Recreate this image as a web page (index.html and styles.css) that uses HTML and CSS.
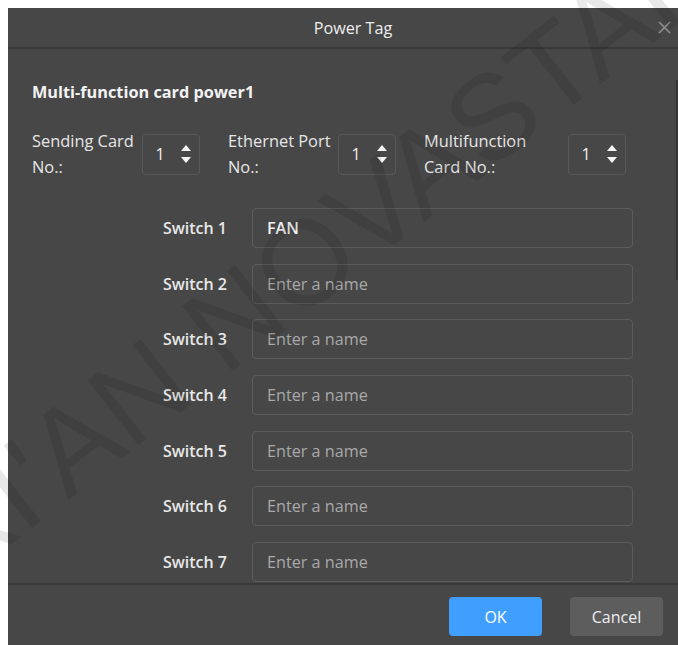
FILE: index.html
```html
<!DOCTYPE html>
<html lang="en">
<head>
<meta charset="utf-8">
<title>Power Tag</title>
<link rel="stylesheet" href="styles.css">
</head>
<body>
<div class="dialog">
  <div class="dialog-header">
    <span class="dialog-title">Power Tag</span>
    <button class="close-btn" aria-label="Close">
      <svg width="13" height="13" viewBox="0 0 13 13"><path d="M1 1 L12 12 M12 1 L1 12" stroke="currentColor" stroke-width="1.6" fill="none"/></svg>
    </button>
  </div>

  <div class="dialog-body">
    <h3 class="section-title">Multi-function card power1</h3>

    <div class="spin-row">
      <div class="spin-group">
        <label class="spin-label w-110">Sending Card No.:</label>
        <div class="spinner"><span class="spin-value">1</span><span class="spin-arrows"><i class="up"></i><i class="down"></i></span></div>
      </div>
      <div class="spin-group">
        <label class="spin-label w-110">Ethernet Port No.:</label>
        <div class="spinner"><span class="spin-value">1</span><span class="spin-arrows"><i class="up"></i><i class="down"></i></span></div>
      </div>
      <div class="spin-group">
        <label class="spin-label w-144">Multifunction<br>Card No.:</label>
        <div class="spinner"><span class="spin-value">1</span><span class="spin-arrows"><i class="up"></i><i class="down"></i></span></div>
      </div>
    </div>

    <div class="switch-list">
      <div class="switch-row"><label class="switch-label">Switch 1</label><input class="name-input" type="text" value="FAN" placeholder="Enter a name"></div>
      <div class="switch-row"><label class="switch-label">Switch 2</label><input class="name-input" type="text" placeholder="Enter a name"></div>
      <div class="switch-row"><label class="switch-label">Switch 3</label><input class="name-input" type="text" placeholder="Enter a name"></div>
      <div class="switch-row"><label class="switch-label">Switch 4</label><input class="name-input" type="text" placeholder="Enter a name"></div>
      <div class="switch-row"><label class="switch-label">Switch 5</label><input class="name-input" type="text" placeholder="Enter a name"></div>
      <div class="switch-row"><label class="switch-label">Switch 6</label><input class="name-input" type="text" placeholder="Enter a name"></div>
      <div class="switch-row"><label class="switch-label">Switch 7</label><input class="name-input" type="text" placeholder="Enter a name"></div>
      <div class="switch-row"><label class="switch-label">Switch 8</label><input class="name-input" type="text" placeholder="Enter a name"></div>
    </div>
    <div class="scroll-thumb"></div>
  </div>

  <div class="dialog-footer">
    <button class="btn btn-primary">OK</button>
    <button class="btn btn-secondary">Cancel</button>
  </div>
</div>

<div class="watermark">XI'AN NOVASTAR</div>
</body>
</html>
```

FILE: styles.css
```css
html, body {
  margin: 0;
  padding: 0;
  background: #ffffff;
  overflow: hidden;
}

body {
  width: 678px;
  height: 645px;
  position: relative;
  font-family: "Open Sans", "Noto Sans", sans-serif;
  color: #ececec;
}

.dialog {
  margin: 8px 0 0 8px;
  width: 670px;
  height: 637px;
  background: #474747;
  display: flex;
  flex-direction: column;
}

/* header */
.dialog-header {
  height: 39px;
  border-bottom: 2px solid #393939;
  display: flex;
  align-items: center;
  justify-content: center;
  padding-left: 20px;
  position: relative;
  flex: none;
}

.dialog-title {
  font-size: 16.2px;
  color: #eeeeee;
}

.close-btn {
  position: absolute;
  right: 7px;
  top: 13px;
  background: none;
  border: 0;
  padding: 0;
  color: #8e8e8e;
  display: flex;
}

/* body */
.dialog-body {
  flex: 1;
  overflow: hidden;
  padding: 32px 0 0 24px;
  position: relative;
}

.section-title {
  margin: 0;
  font-size: 16.3px;
  font-weight: 700;
  line-height: 22px;
  color: #f2f2f2;
}

.spin-row {
  display: flex;
  margin-top: 25px;
  gap: 28px;
}

.spin-group {
  display: flex;
  align-items: center;
}

.spin-label {
  font-size: 16.4px;
  line-height: 26px;
  color: #e6e6e6;
}

.w-110 { width: 110px; }
.w-144 { width: 144px; }

.spinner {
  width: 56px;
  height: 39px;
  border: 1px solid #585858;
  border-radius: 4px;
  display: flex;
  align-items: center;
  box-sizing: content-box;
}

.spin-value {
  width: 34px;
  text-align: center;
  font-size: 16px;
  color: #f0f0f0;
}

.spin-arrows {
  display: flex;
  flex-direction: column;
  gap: 6px;
  margin-left: 4px;
}

.spin-arrows i {
  display: block;
  width: 0;
  height: 0;
  border-left: 5.5px solid transparent;
  border-right: 5.5px solid transparent;
}

.spin-arrows .up { border-bottom: 6px solid #f4f4f4; }
.spin-arrows .down { border-top: 6px solid #f4f4f4; }

/* switch rows */
.switch-list {
  display: flex;
  flex-direction: column;
  gap: 15.7px;
  margin-top: 28px;
}

.switch-row {
  display: flex;
  align-items: center;
}

.switch-label {
  width: 220px;
  text-align: right;
  padding-right: 25px;
  box-sizing: border-box;
  font-size: 16px;
  font-weight: 600;
  color: #e8e8e8;
}

.name-input {
  width: 381px;
  height: 40px;
  box-sizing: border-box;
  background: transparent;
  border: 1px solid #5c5c5c;
  border-radius: 4px;
  padding: 0 14px;
  font-family: inherit;
  font-size: 16.2px;
  font-weight: 600;
  color: #f2f2f2;
  outline: none;
}

.name-input::placeholder {
  color: #a9a9a9;
  font-weight: 400;
}

.scroll-thumb {
  position: absolute;
  right: 0;
  top: 31px;
  width: 2px;
  height: 200px;
  background: #343434;
}

/* footer */
.dialog-footer {
  height: 62px;
  border-top: 2px solid #393939;
  display: flex;
  justify-content: flex-end;
  align-items: flex-start;
  gap: 28px;
  padding: 12px 15px 0 0;
  box-sizing: border-box;
  flex: none;
}

.btn {
  width: 93px;
  height: 39px;
  border: 0;
  border-radius: 4px;
  font-family: inherit;
  font-size: 16px;
  color: #ffffff;
}

.btn-primary { background: #409eff; }
.btn-secondary { background: #5d5d5d; color: #eeeeee; }

/* faint diagonal company mark across the window */
.watermark {
  position: absolute;
  left: 320px;
  top: 250px;
  transform: translate(-50%, -50%) rotate(-38deg);
  font-family: "Liberation Sans", sans-serif;
  font-size: 120px;
  font-weight: 400;
  white-space: nowrap;
  color: rgba(0, 0, 0, 0.09);
  pointer-events: none;
  line-height: 1;
}
```
